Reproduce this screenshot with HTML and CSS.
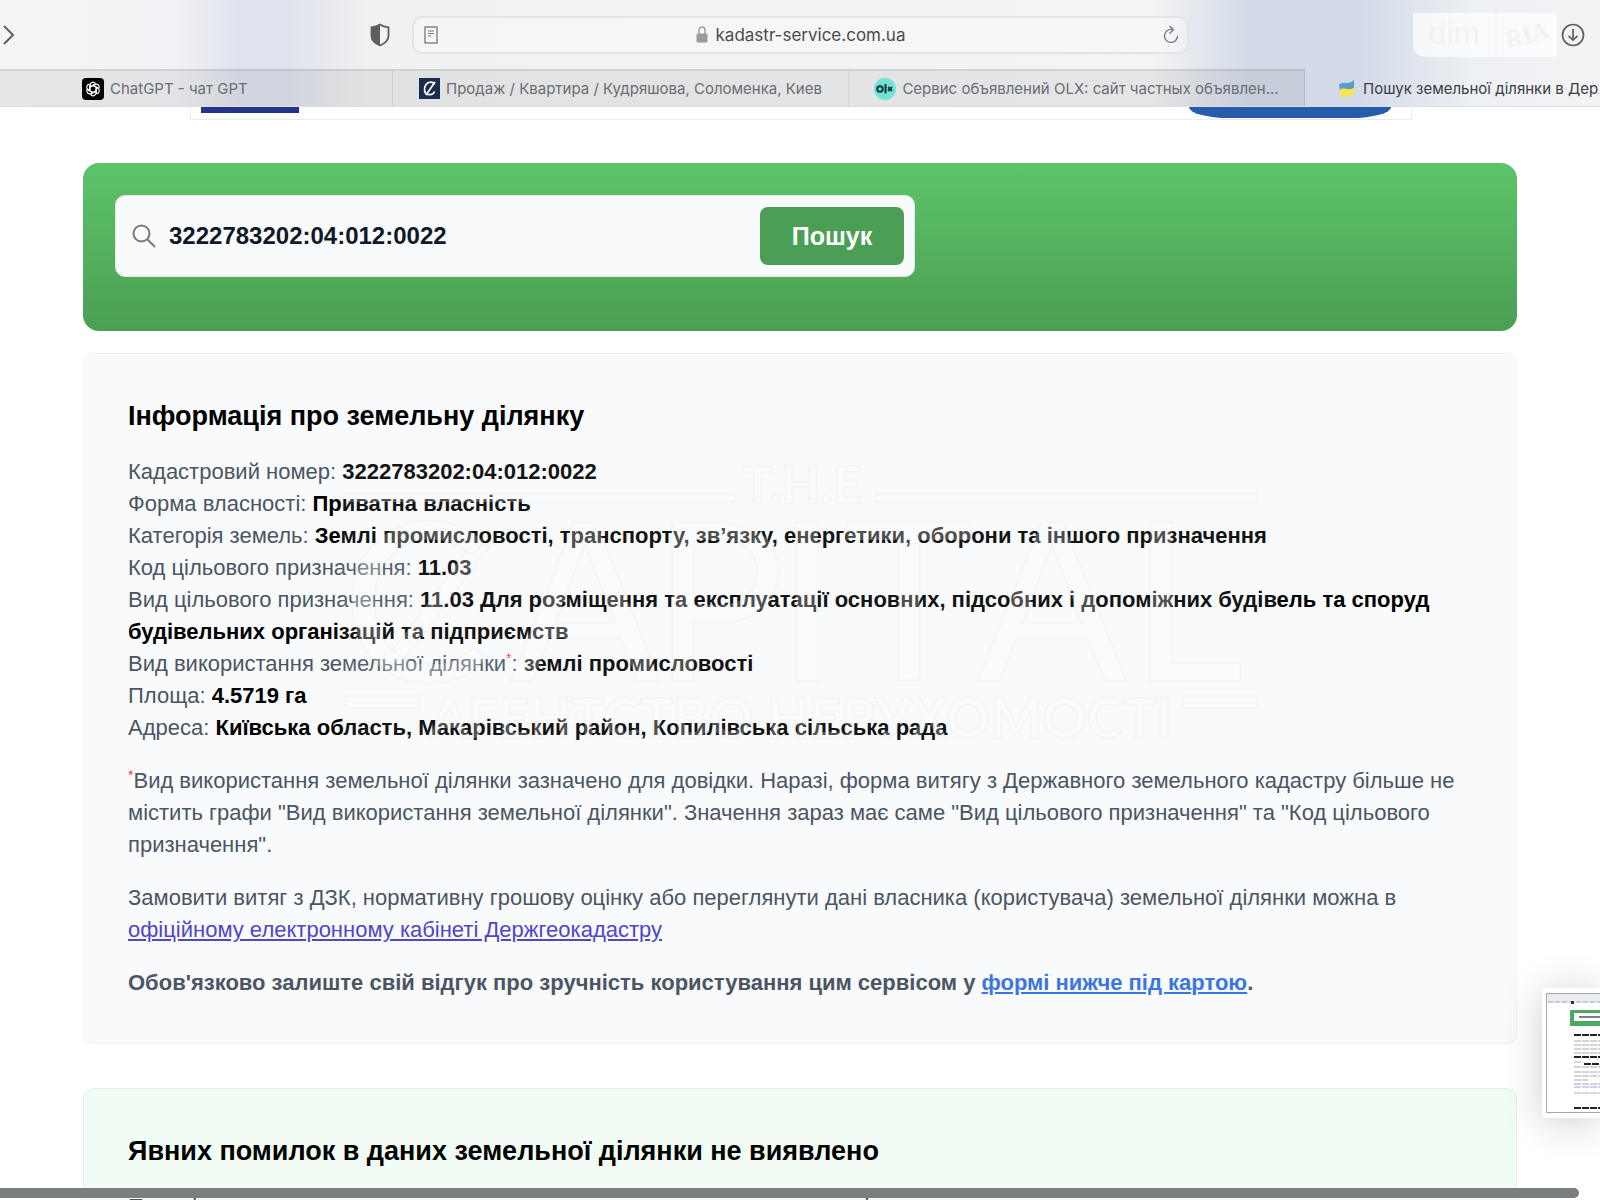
FILE: index.html
```html
<!DOCTYPE html>
<html lang="uk">
<head>
<meta charset="utf-8">
<title>Пошук земельної ділянки</title>
<link rel="stylesheet" href="styles.css">
</head>
<body>
<div class="window">
  <header class="chrome">
    <div class="toolbar">
      <button class="icon-btn forward" type="button" aria-label="Вперед"><svg width="14" height="22" viewBox="0 0 14 22"><path d="M2 2l9 9-9 9" fill="none" stroke="#5f6062" stroke-width="2"/></svg></button>
      <button class="icon-btn shield" type="button" aria-label="Приватність"><svg width="20" height="24" viewBox="0 0 20 24"><path d="M10 1.5C7.500 3.300 4.500 4 1.500 4.300V13c0 5 4 7.500 8.500 9.500C14.500 20.500 18.500 18 18.500 13V4.300C15.500 4 12.500 3.300 10 1.500z" fill="none" stroke="#5d5e60" stroke-width="1.800"/><path d="M10 1.500V22.500C5.500 20.500 1.500 18 1.500 13V4.300C4.500 4 7.500 3.300 10 1.500z" fill="#5d5e60"/></svg></button>
      <div class="address">
        <svg class="reader" width="14" height="18" viewBox="0 0 14 18" fill="none" stroke="#77787a"><rect x="1" y="1" width="12" height="16" stroke-width="1.300"/><path d="M4 5h6M4 7.500h6M4 10h3" stroke-width="1"/></svg>
        <span class="host"><svg width="12" height="17" viewBox="0 0 12 17"><path d="M3 8V4.500a3 3.500 0 0 1 6 0V8" fill="none" stroke="#989a9b" stroke-width="1.400"/><rect x="0.500" y="7.500" width="11" height="9" rx="1.500" fill="#989a9b"/></svg>kadastr-service.com.ua</span>
        <button class="icon-btn" type="button" aria-label="Оновити"><svg width="16" height="20" viewBox="0 0 16 20" fill="none" stroke="#77797c" stroke-width="1.400"><path d="M9 4.500A6.500 6.500 0 1 0 14.500 11M6.500 1l4 3.800-4 3.700"/></svg></button>
      </div>
      <div class="badge"><span class="badge-dim">dim</span><span class="badge-ria">RIA</span></div>
      <button class="icon-btn download" type="button" aria-label="Завантаження"><svg width="24" height="24" viewBox="0 0 24 24" fill="none" stroke="#5f6062" stroke-width="1.700"><circle cx="12" cy="12" r="10.500"/><path d="M12 6v11M7.500 12.800L12 17l4.500-4.200"/></svg></button>
    </div>
    <nav class="tabs">
      <a class="tab tab-first" href="#"><svg width="22" height="22" viewBox="0 0 22 22"><rect width="22" height="22" rx="4"/><g fill="none" stroke="#fff" stroke-width="1.200"><path id="knot" d="M8 12.500V7.200a3 3 0 0 1 5.500-1.600M8.500 8.500l4.500-2.600"/><use href="#knot" transform="rotate(60 11 11)"/><use href="#knot" transform="rotate(120 11 11)"/><use href="#knot" transform="rotate(180 11 11)"/><use href="#knot" transform="rotate(240 11 11)"/><use href="#knot" transform="rotate(300 11 11)"/></g></svg>ChatGPT - чат GPT</a>
      <a class="tab" href="#"><svg width="21" height="21" viewBox="0 0 21 21"><rect width="21" height="21" fill="#1d2b4c"/><path d="M15.500 6.500C14.500 3.500 9.500 3 7 6.500S5 16 9 16.500s6-1.500 6.500-3M16 4L7 17" fill="none" stroke="#fff" stroke-width="1.700"/></svg>Продаж / Квартира / Кудряшова, Соломенка, Киев</a>
      <a class="tab" href="#"><svg width="22" height="22" viewBox="0 0 22 22"><circle cx="11" cy="11" r="11" fill="#76e2d5"/><circle cx="6" cy="11" r="2.800" fill="none" stroke="#063a40" stroke-width="2"/><path d="M11.500 6v9.500M14 9l4 4M18 9l-4 4" fill="none" stroke="#063a40" stroke-width="2"/></svg>Сервис объявлений OLX: сайт частных объявлен...</a>
      <a class="tab tab-active" href="#"><svg width="20" height="20" viewBox="0 0 20 20"><path d="M2 6C6 1 11 7 17 1v9c-6 4-10-2-14 2z" fill="#5b9bd0"/><path d="M2.500 11C7 7 11 13 18 8l-1 6c-5 5-9 2-12 5z" fill="#f3e54b"/></svg>Пошук земельної ділянки в Держгеокадастрі</a>
    </nav>
  </header>

  <main class="page">
    <div class="banner"><span class="banner-logo"></span><span class="banner-button"></span></div>

    <section class="search-panel">
      <form class="search">
        <label class="search-label" for="number"><svg role="img" aria-label="Кадастровий номер" width="24" height="24" viewBox="0 0 24 24" fill="none" stroke="#77797d" stroke-width="2"><circle cx="9.500" cy="9.500" r="8"/><path d="M15.500 15.500L23 23"/></svg></label>
        <input class="search-input" id="number" type="text" value="3222783202:04:012:0022">
        <button class="search-button" type="button">Пошук</button>
      </form>
    </section>

    <section class="card">
      <h2>Інформація про земельну ділянку</h2>
      <p>Кадастровий номер: <b>3222783202:04:012:0022</b><br>
      Форма власності: <b>Приватна власність</b><br>
      Категорія земель: <b>Землі промисловості, транспорту, зв’язку, енергетики, оборони та іншого призначення</b><br>
      Код цільового призначення: <b>11.03</b><br>
      Вид цільового призначення: <b>11.03 Для розміщення та експлуатації основних, підсобних і допоміжних будівель та споруд будівельних організацій та підприємств</b><br>
      Вид використання земельної ділянки<sup>*</sup>: <b>землі промисловості</b><br>
      Площа: <b>4.5719 га</b><br>
      Адреса: <b>Київська область, Макарівський район, Копилівська сільська рада</b></p>
      <p><sup>*</sup>Вид використання земельної ділянки зазначено для довідки. Наразі, форма витягу з Державного земельного кадастру більше не містить графи "Вид використання земельної ділянки". Значення зараз має саме "Вид цільового призначення" та "Код цільового призначення".</p>
      <p>Замовити витяг з ДЗК, нормативну грошову оцінку або переглянути дані власника (користувача) земельної ділянки можна в <a class="link-visited" href="#">офіційному електронному кабінеті Держгеокадастру</a></p>
      <p class="feedback">Обов'язково залиште свій відгук про зручність користування цим сервісом у <a class="link" href="#">формі нижче під картою</a>.</p>
      <svg class="watermark" width="934" height="304" viewBox="0 0 934 304" aria-hidden="true">
        <rect width="934" height="304" fill="#fff" opacity="0.080"/>
        <g class="mark">
          <text x="400" y="47" class="mark-small">T.H.E</text>
          <path d="M4 38h389v8H4zM534 38h381v8H534zM4 240h73v12H4zM841 240h74v12h-74zM128 90h20L60 206H42z"/>
          <text y="225" class="mark-large" x="0 168 310 434 501 635 788">CAPITAL</text>
          <text x="88" y="282" class="mark-line">АГЕНТСТВО НЕРУХОМОСТІ</text>
        </g>
      </svg>
    </section>

    <section class="card card-ok">
      <h2>Явних помилок в даних земельної ділянки не виявлено</h2>
      <p>Перевірка основних даних показала, що явних помилок у записах про ділянку немає</p>
    </section>
  </main>

  <aside class="preview" aria-hidden="true">
    <svg width="54" height="120" viewBox="0 0 54 120"><rect x="0.500" y="0.500" width="60" height="119" fill="#fff" stroke="#a8a8ab"/><path d="M1 1h53v9H1z" fill="#e9ebf2"/><path d="M2 9h52" stroke="#aaa" stroke-dasharray="5 2"/><path d="M25 8h3v3h-3z" fill="#333"/><path d="M24 17h30v16H24z" fill="#4fa862"/><path d="M28 20h26v8H28z" fill="#fff"/><path d="M33 24h21" stroke="#555" stroke-width="1.500"/><g stroke-dasharray="7 1"><path d="M28 42h26M28 64h26M38 71h16M28 115h26" stroke="#222" stroke-width="2"/><path d="M28 48h26M28 52h26M28 56h26M28 60h26M28 69h8M28 74h26M28 79h26M28 83h26M28 87h14M28 100h26" stroke="#aaa"/><path d="M28 91h26M28 94h26" stroke="#a49ee0"/></g></svg>
  </aside>
  <div class="scrollbar"></div>
</div>
</body>
</html>
```
FILE: styles.css
```css
* { box-sizing: border-box; }

body {
  margin: 0;
  background: #fff;
  color: #4b5563;
  font: 22px/32px "Liberation Sans", Arial, sans-serif;
}

.window {
  position: relative;
  height: 100vh;
  overflow: hidden;
}

/* Browser chrome */
.chrome {
  background: linear-gradient(90deg, #f4f5f6 0%, #f0f2f5 11%, #dfe3ed 15%, #dfe3ec 18%, #f0f1f2 23%, #f3f4f5 72%, #d3dbe8 78%, #d3dbe8 85%, #edf0f4 92%, #f2f3f5 100%);
  border-bottom: 1px solid #dddee0;
  font-family: Inter, sans-serif;
}

.toolbar {
  display: flex;
  align-items: center;
  height: 69px;
  padding: 0 15px 0 2px;
}

.icon-btn {
  display: flex;
  padding: 0;
  border: 0;
  background: none;
}

.shield { margin-left: 354px; margin-right: 22px; }

.address {
  display: flex;
  flex: 0 1 777px;
  align-items: center;
  justify-content: space-between;
  height: 38px;
  padding: 0 8px 0 10px;
  border: 2px solid #e2e4e6;
  border-radius: 10px;
  background: rgba(255, 255, 255, 0.3);
}

.host {
  display: flex;
  align-items: center;
  gap: 8px;
  color: #4a4b4d;
  font-size: 17px;
}

.badge {
  display: flex;
  align-items: center;
  height: 44px;
  margin-left: auto;
  margin-right: 4px;
  border-radius: 0 0 0 12px;
  background: rgba(255, 255, 255, 0.7);
  color: #f0f2f4;
}

.badge-dim { padding: 0 15px 4px; border-right: 2px solid #f4f5f7; font: 30px/40px Inter, sans-serif; }
.badge-ria { padding: 0 8px; font: bold 24px/44px "Liberation Serif", serif; transform: rotate(-14deg); }

.tabs {
  display: grid;
  grid-template-columns: 393fr 456fr 456fr 295fr;
  height: 37px;
}

.tab {
  display: flex;
  align-items: center;
  justify-content: center;
  gap: 6px;
  min-width: 0;
  overflow: hidden;
  border-top: 2px solid rgba(0, 0, 0, 0.08);
  border-right: 1px solid rgba(0, 0, 0, 0.08);
  background: rgba(0, 0, 0, 0.06);
  color: #6b6d70;
  font-size: 15px;
  text-decoration: none;
  white-space: nowrap;
}

.tab svg { flex: none; }
.tab-first { justify-content: flex-start; padding-left: 82px; }
.tab-active { justify-content: flex-start; padding-left: 32px; border-color: transparent; background: none; color: #3c3d40; }

/* Page */
.page { padding: 0 83px; }

.banner {
  display: flex;
  justify-content: space-between;
  align-items: flex-start;
  height: 13px;
  margin: 0 105px 43px 107px;
  padding: 0 20px 0 10px;
  border: 1px solid #ebebed;
  border-top: 0;
}

.banner-logo { width: 98px; height: 6px; background: #26338a; }
.banner-button { width: 202px; height: 11px; border-radius: 0 0 40px 40px / 0 0 11px 11px; background: #265cab; }

.search-panel {
  padding: 32px 32px 54px;
  border-radius: 16px;
  background: linear-gradient(#5dc46a, #4b9f54);
}

.search {
  display: flex;
  align-items: center;
  max-width: 800px;
  height: 82px;
  padding: 0 10px 0 16px;
  border: 1px solid #e2e8e5;
  border-radius: 10px;
  background: #f9fafc;
}

.search-label { display: flex; }

.search-input {
  flex: 1;
  min-width: 0;
  padding: 0 0 0 13px;
  border: 0;
  outline: 0;
  background: none;
  color: #111827;
  font: bold 24px/32px "Liberation Sans", Arial, sans-serif;
}

.search-button {
  width: 144px;
  height: 58px;
  padding: 0;
  border: 0;
  border-radius: 8px;
  background: #4b9f54;
  color: #fff;
  font: bold 25px/32px "Liberation Sans", Arial, sans-serif;
}

.card {
  position: relative;
  margin-top: 22px;
  padding: 44px;
  border: 1px solid #f0f2f4;
  border-radius: 10px;
  background: #f9fafb;
}

.card-ok {
  margin-top: 44px;
  border-color: #e0f5e8;
  background: #f1fcf4;
}

h2 {
  margin: 0 0 22px;
  color: #000;
  font-size: 27px;
  line-height: 36px;
}

p { margin: 0 0 21px; }
p:last-of-type { margin-bottom: 0; }
p b { color: #000; }

sup { color: #ef4444; font-size: 14px; line-height: 0; }

.feedback { font-weight: bold; }
.link-visited { color: #4f46c8; }
.link { color: #3b76e0; }

/* Agency mark laid over the card */
.watermark {
  position: absolute;
  top: 102px;
  left: 258px;
  pointer-events: none;
}

.mark { fill: #fff; fill-opacity: 0.25; stroke: #8a8a7a; stroke-opacity: 0.04; stroke-width: 2px; font-family: Lato, sans-serif; }
.mark-small { font-size: 51px; font-weight: bold; }
.mark-large { font-size: 222px; }
.mark-line { font-size: 55px; font-weight: bold; }

.preview {
  position: absolute;
  right: 0;
  bottom: 82px;
  padding: 5px 0 5px 4px;
  border-radius: 4px 0 0 4px;
  background: #fff;
  box-shadow: 0 4px 40px rgba(0, 0, 0, 0.2);
}

.preview svg { display: block; }

.scrollbar {
  position: absolute;
  right: 21px;
  bottom: 2px;
  left: 0;
  height: 10px;
  border-radius: 0 5px 5px 0;
  background: #7b7f7b;
}
```
